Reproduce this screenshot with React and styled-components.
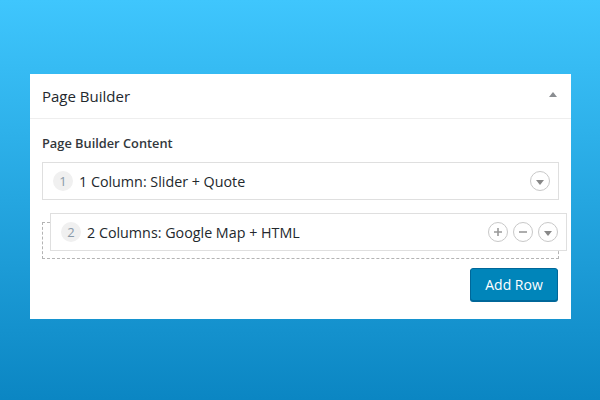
import styled, { createGlobalStyle } from "styled-components";

const GlobalStyle = createGlobalStyle`
  html, body {
    margin: 0;
    padding: 0;
  }
  body {
    font-family: "Open Sans", "Noto Sans", sans-serif;
  }
`;

const rows = [
  { id: 1, title: "1 Column: Slider + Quote" },
  { id: 2, title: "2 Columns: Google Map + HTML" },
];

export default function App() {
  return (
    <>
      <GlobalStyle />
      <Page>
        <Panel>
          <PanelHeader>
            <h2>Page Builder</h2>
            <Caret />
          </PanelHeader>
          <PanelBody>
            <Label>Page Builder Content</Label>
            <Row>
              <RowNumber>{rows[0].id}</RowNumber>
              <RowTitle>{rows[0].title}</RowTitle>
              <Actions>
                <RoundButton aria-label="Toggle">
                  <ArrowDown />
                </RoundButton>
              </Actions>
            </Row>
            <Placeholder>
              <Row dragging>
                <RowNumber>{rows[1].id}</RowNumber>
                <RowTitle>{rows[1].title}</RowTitle>
                <Actions>
                  <RoundButton aria-label="Add">
                    <svg width="10" height="10" viewBox="0 0 10 10">
                      <path d="M5 1v8M1 5h8" stroke="#999" strokeWidth="1.6" />
                    </svg>
                  </RoundButton>
                  <RoundButton aria-label="Remove">
                    <svg width="10" height="10" viewBox="0 0 10 10">
                      <path d="M1 5h8" stroke="#999" strokeWidth="1.6" />
                    </svg>
                  </RoundButton>
                  <RoundButton aria-label="Toggle">
                    <ArrowDown />
                  </RoundButton>
                </Actions>
              </Row>
            </Placeholder>
            <Footer>
              <AddButton>Add Row</AddButton>
            </Footer>
          </PanelBody>
        </Panel>
      </Page>
    </>
  );
}

const Page = styled.div`
  width: 600px;
  height: 400px;
  box-sizing: border-box;
  padding: 74px 29px 0 30px;
  background: linear-gradient(to bottom, #3fc6fd 0%, #0b86c3 100%);
  overflow: hidden;
`;

const Panel = styled.div`
  background: #fff;
  width: 541px;
`;

const PanelHeader = styled.div`
  height: 45px;
  box-sizing: border-box;
  border-bottom: 1px solid #eee;
  display: flex;
  align-items: center;
  justify-content: space-between;
  padding: 0 14px 0 12px;

  h2 {
    margin: 0;
    font-size: 15px;
    font-weight: 400;
    color: #23282d;
    padding-bottom: 1px;
  }
`;

const Caret = styled.span`
  width: 0;
  height: 0;
  border-left: 4px solid transparent;
  border-right: 4px solid transparent;
  border-bottom: 5px solid #8a8d91;
  margin-bottom: 3px;
`;

const PanelBody = styled.div`
  padding: 15px 12px 18px;
`;

const Label = styled.div`
  font-size: 12.8px;
  font-weight: 600;
  line-height: 18px;
  color: #32373c;
  margin-bottom: 10px;
`;

const Row = styled.div`
  height: 38px;
  box-sizing: border-box;
  border: 1px solid #dfdfdf;
  background: #fff;
  display: flex;
  align-items: center;
  padding: 0 8px 0 10px;
  margin-bottom: 22px;
  width: 517px;

  ${({ dragging }) =>
    dragging &&
    `
    position: absolute;
    left: 7px;
    top: -10px;
    margin: 0;
  `}
`;

const RowNumber = styled.span`
  width: 20px;
  height: 20px;
  border-radius: 50%;
  background: #f0f0f0;
  color: #8a9aa8;
  font-size: 13px;
  display: flex;
  align-items: center;
  justify-content: center;
  flex-shrink: 0;
`;

const RowTitle = styled.span`
  flex: 1;
  margin-left: 6px;
  font-size: 14.3px;
  color: #23282d;
`;

const Actions = styled.div`
  display: flex;
  gap: 5px;
`;

const RoundButton = styled.span`
  width: 20px;
  height: 20px;
  box-sizing: border-box;
  border-radius: 50%;
  border: 1px solid #c8c8c8;
  display: flex;
  align-items: center;
  justify-content: center;
`;

const ArrowDown = styled.span`
  width: 0;
  height: 0;
  border-left: 4px solid transparent;
  border-right: 4px solid transparent;
  border-top: 5px solid #888;
  margin-top: 2px;
`;

const Placeholder = styled.div`
  position: relative;
  height: 37px;
  box-sizing: border-box;
  border: 1px dashed #b4b4b4;
  margin-bottom: 9px;
`;

const Footer = styled.div`
  display: flex;
  justify-content: flex-end;
  padding-right: 1px;
`;

const AddButton = styled.button`
  width: 88px;
  height: 33px;
  background: #0085ba;
  border: 1px solid #006799;
  border-radius: 3px;
  box-shadow: 0 1px 0 #006799;
  color: #fff;
  font-family: "Open Sans", "Noto Sans", sans-serif;
  font-size: 14px;
  padding: 0;
  cursor: pointer;
`;
